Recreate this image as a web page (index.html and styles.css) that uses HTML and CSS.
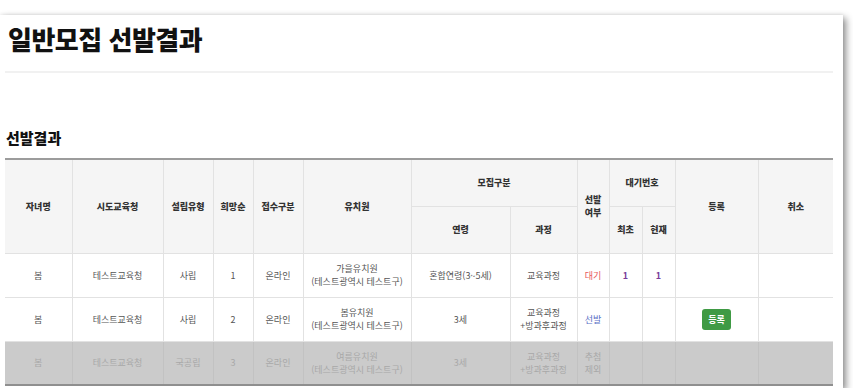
FILE: index.html
```html
<!DOCTYPE html>
<html lang="ko">
<head>
<meta charset="utf-8">
<link rel="stylesheet" href="styles.css">
</head>
<body>
<div class="card">
  <h1 class="title">일반모집 선발결과</h1>
  <div class="rule"></div>
  <h2 class="subtitle">선발결과</h2>
  <table class="result">
    <colgroup>
      <col class="c1"><col class="c2"><col class="c3"><col class="c4"><col class="c5"><col class="c6"><col class="c7"><col class="c8"><col class="c9"><col class="c10"><col class="c11"><col class="c12"><col class="c13">
    </colgroup>
    <thead>
      <tr class="h1">
        <th rowspan="2">자녀명</th>
        <th rowspan="2">시도교육청</th>
        <th rowspan="2">설립유형</th>
        <th rowspan="2">희망순</th>
        <th rowspan="2">접수구분</th>
        <th rowspan="2">유치원</th>
        <th colspan="2">모집구분</th>
        <th rowspan="2">선발<br>여부</th>
        <th colspan="2">대기번호</th>
        <th rowspan="2">등록</th>
        <th rowspan="2">취소</th>
      </tr>
      <tr class="h2">
        <th>연령</th>
        <th>과정</th>
        <th>최초</th>
        <th>현재</th>
      </tr>
    </thead>
    <tbody>
      <tr>
        <td>봄</td>
        <td>테스트교육청</td>
        <td>사립</td>
        <td>1</td>
        <td>온라인</td>
        <td>가을유치원<br>(테스트광역시 테스트구)</td>
        <td>혼합연령(3~5세)</td>
        <td>교육과정</td>
        <td class="wait">대기</td>
        <td class="num">1</td>
        <td class="num">1</td>
        <td></td>
        <td></td>
      </tr>
      <tr>
        <td>봄</td>
        <td>테스트교육청</td>
        <td>사립</td>
        <td>2</td>
        <td>온라인</td>
        <td>봄유치원<br>(테스트광역시 테스트구)</td>
        <td>3세</td>
        <td>교육과정<br>+방과후과정</td>
        <td class="pick">선발</td>
        <td></td>
        <td></td>
        <td><span class="btn">등록</span></td>
        <td></td>
      </tr>
      <tr class="off">
        <td>봄</td>
        <td>테스트교육청</td>
        <td>국공립</td>
        <td>3</td>
        <td>온라인</td>
        <td>여름유치원<br>(테스트광역시 테스트구)</td>
        <td>3세</td>
        <td>교육과정<br>+방과후과정</td>
        <td>추첨<br>제외</td>
        <td></td>
        <td></td>
        <td></td>
        <td></td>
      </tr>
    </tbody>
  </table>
</div>
</body>
</html>
```

FILE: styles.css
```css
* { box-sizing: border-box; }
html, body {
  margin: 0;
  padding: 0;
  background: #ffffff;
  overflow: hidden;
}
body {
  font-family: "Noto Sans CJK KR", "Noto Sans", sans-serif;
  color: #222;
}
.card {
  margin-top: 15px;
  width: 843px;
  height: 373px;
  background: #fff;
  padding: 0 10px 0 5px;
  box-shadow: 3px 3px 7px rgba(0, 0, 0, 0.45), 0 -1px 3px rgba(0, 0, 0, 0.06);
}
.title {
  margin: 0;
  padding: 7px 0 0 3px;
  height: 56px;
  font-size: 26px;
  line-height: 34px;
  font-weight: 900;
  color: #111;
  letter-spacing: -0.5px;
}
.rule {
  height: 2px;
  background: #f1f1f1;
  width: 828px;
}
.subtitle {
  margin: 0;
  padding: 54px 0 0 1px;
  height: 85px;
  font-size: 15px;
  line-height: 22px;
  font-weight: 900;
  color: #111;
}
.result {
  border-collapse: collapse;
  table-layout: fixed;
  width: 828px;
  border-top: 2px solid #9c9c9c;
  border-bottom: 2px solid #8f8f8f;
  font-size: 9px;
  line-height: 13px;
  text-align: center;
}
.c1 { width: 67px; }
.c2 { width: 91px; }
.c3 { width: 50px; }
.c4 { width: 40px; }
.c5 { width: 50px; }
.c6 { width: 108px; }
.c7 { width: 99px; }
.c8 { width: 67px; }
.c9 { width: 32px; }
.c10 { width: 33px; }
.c11 { width: 33px; }
.c12 { width: 83px; }
.c13 { width: 75px; }
.result th, .result td {
  border: 1px solid #e2e2e2;
  padding: 0;
  vertical-align: middle;
}
.result tr > :first-child { border-left: none; }
.result tr > :last-child { border-right: none; }
.result th {
  background: #f5f5f5;
  font-weight: 900;
  color: #333;
}
.h1 { height: 47px; }
.h2 { height: 47px; }
.result tbody tr { height: 44px; }
.result td { color: #555; }
.result td.wait { color: #e8585a; }
.result td.num { color: #7a3d9a; font-weight: 700; }
.result td.pick { color: #5a6fc6; }
.btn {
  display: inline-block;
  width: 29px;
  height: 21px;
  line-height: 21px;
  border-radius: 3px;
  background: #3f9a44;
  color: #fff;
  font-weight: 700;
}
.result tr.off td {
  background: #cbcbcb;
  color: #a8a8a8;
  border-color: #c2c2c2;
}
```
